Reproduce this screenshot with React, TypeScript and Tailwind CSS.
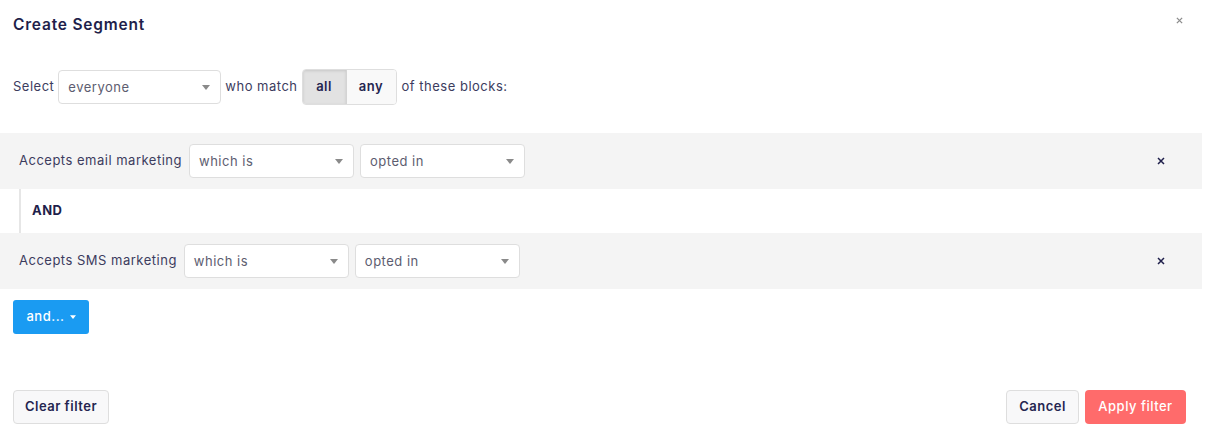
import React from 'react';

const Caret: React.FC<{ className?: string }> = ({ className }) => (
  <svg width="8" height="5" viewBox="0 0 8 5" className={className}>
    <path d="M0 0h8L4 5z" fill="currentColor" />
  </svg>
);

const Select: React.FC<{ value: string; width: string }> = ({ value, width }) => (
  <div
    className={`${width} h-[34px] flex items-center justify-between bg-white border border-[#dedede] rounded-[4px] pl-[9px] pr-[10px] pt-[1px] text-[13px] text-[#5d5d70]`}
  >
    <span>{value}</span>
    <Caret className="text-[#8a8a8a]" />
  </div>
);

const Cross: React.FC<{ className?: string; size?: number }> = ({ className, size = 8 }) => (
  <svg width={size} height={size} viewBox="0 0 8 8" className={className}>
    <path d="M1 1l6 6M7 1L1 7" stroke="currentColor" strokeWidth="1.5" />
  </svg>
);

const conditions = [
  { label: 'Accepts email marketing' },
  { label: 'Accepts SMS marketing' },
];

export default function App() {
  return (
    <div
      className="w-[1210px] h-[434px] bg-white text-[#2e2e52] relative tracking-[0.5px]"
      style={{ fontFamily: 'Inter, "Open Sans", sans-serif' }}
    >
      <div className="w-[1202px]">
        {/* Header */}
        <div className="flex items-center justify-between h-[46px] pl-[13px] pr-[19px]">
          <h1 className="text-[15.5px] font-semibold text-[#1f1f4b] tracking-[0.8px] mt-[3px]">Create Segment</h1>
          <Cross className="text-[#8c8c8c] mt-[-6px]" size={7} />
        </div>

        {/* Match row */}
        <div className="flex items-center gap-[4px] pl-[13px] mt-[23px] text-[13px] text-[#3c3c5e]">
          <span>Select</span>
          <Select value="everyone" width="w-[163px]" />
          <span>who match</span>
          <div className="flex h-[36px] border border-[#dedede] rounded-[4px] overflow-hidden text-[13px] font-semibold text-[#252550]">
            <div className="w-[44px] flex items-center justify-center bg-[#e2e2e2] shadow-[inset_0_1px_3px_rgba(0,0,0,0.12)] border-r border-[#d4d4d4]">all</div>
            <div className="w-[49px] flex items-center justify-center bg-[#f9f9f9]">any</div>
          </div>
          <span className="ml-[1px]">of these blocks:</span>
        </div>

        {/* Conditions */}
        <div className="mt-[28px]">
          {conditions.map((c, i) => (
            <React.Fragment key={c.label}>
              {i > 0 && (
                <div className="ml-[19px] h-[44px] border-l-[2px] border-[#e6e6e6] flex items-center pl-[11px] text-[13px] font-bold text-[#1f1f4b]">
                  AND
                </div>
              )}
              <div className="h-[56px] bg-[#f4f4f4] flex items-center pl-[19px] pr-[37px] text-[13px] text-[#3c3c5e]">
                <span className="mr-[7px]">{c.label}</span>
                <Select value="which is" width="w-[165px]" />
                <div className="w-[6px]" />
                <Select value="opted in" width="w-[165px]" />
                <div className="flex-1" />
                <Cross className="text-[#1f1f4b]" />
              </div>
            </React.Fragment>
          ))}
        </div>

        {/* and... button */}
        <div className="pl-[13px] mt-[11px]">
          <button className="h-[34px] w-[76px] rounded-[3px] bg-[#1a9bf2] text-white text-[13px] font-medium flex items-center justify-center gap-[5px]">
            <span>and...</span>
            <Caret className="w-[6px] h-[4px]" />
          </button>
        </div>
      </div>

      {/* Footer */}
      <div className="absolute left-0 right-0 top-[390px] flex items-center justify-between pl-[13px] pr-[24px] text-[13px] font-semibold">
        <button className="h-[34px] w-[96px] rounded-[4px] border border-[#dedede] bg-[#f8f8f9] text-[#252550]">
          Clear filter
        </button>
        <div className="flex gap-[6px]">
          <button className="h-[34px] w-[73px] rounded-[4px] border border-[#dedede] bg-[#f8f8f9] text-[#252550]">
            Cancel
          </button>
          <button className="h-[34px] w-[101px] rounded-[4px] bg-[#ff6b6b] text-white font-medium">
            Apply filter
          </button>
        </div>
      </div>
    </div>
  );
}
